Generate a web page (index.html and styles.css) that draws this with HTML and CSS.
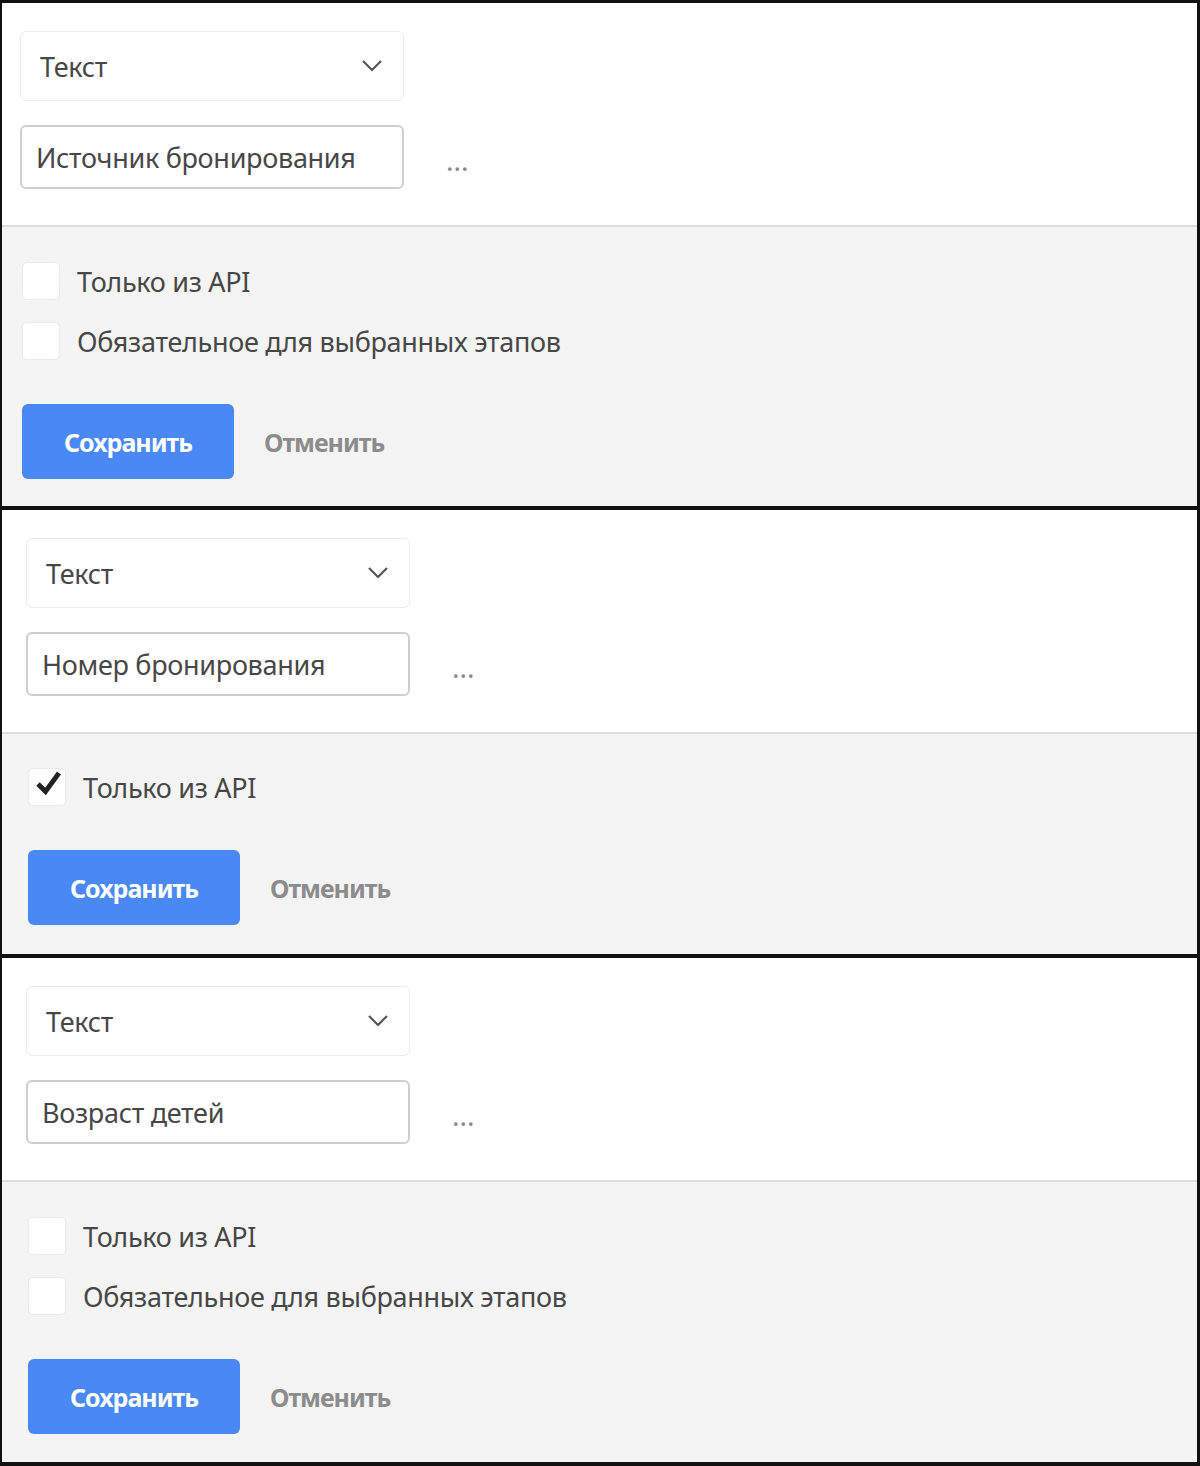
FILE: index.html
```html
<!DOCTYPE html>
<html lang="ru">
<head>
<meta charset="UTF-8">
<meta name="viewport" content="width=device-width, initial-scale=1.0">
<title>Поля бронирования</title>
<link rel="stylesheet" href="styles.css">
</head>
<body>

<div class="panel panel-first">
  <div class="panel-top">
    <div class="select">
      <span>Текст</span>
      <svg class="chevron" width="22" height="14" viewBox="0 0 22 14"><path d="M2 2 L11 11 L20 2" fill="none" stroke="#555" stroke-width="2.2"/></svg>
    </div>
    <div class="input-row">
      <div class="input">Источник бронирования</div>
      <span class="more">...</span>
    </div>
  </div>
  <div class="panel-bottom">
    <div class="checks">
      <label class="check"><span class="box"></span>Только из API</label>
      <label class="check"><span class="box"></span>Обязательное для выбранных этапов</label>
    </div>
    <div class="actions">
      <button class="btn-save">Сохранить</button>
      <button class="btn-cancel">Отменить</button>
    </div>
  </div>
</div>

<div class="panel panel-shift panel-middle">
  <div class="panel-top">
    <div class="select">
      <span>Текст</span>
      <svg class="chevron" width="22" height="14" viewBox="0 0 22 14"><path d="M2 2 L11 11 L20 2" fill="none" stroke="#555" stroke-width="2.2"/></svg>
    </div>
    <div class="input-row">
      <div class="input">Номер бронирования</div>
      <span class="more">...</span>
    </div>
  </div>
  <div class="panel-bottom">
    <div class="checks">
      <label class="check">
        <span class="box">
          <svg class="tick" width="30" height="30" viewBox="0 0 30 30"><path d="M4 15 L11.5 22.5 L25 4" fill="none" stroke="#222" stroke-width="4.8"/></svg>
        </span>Только из API
      </label>
    </div>
    <div class="actions">
      <button class="btn-save">Сохранить</button>
      <button class="btn-cancel">Отменить</button>
    </div>
  </div>
</div>

<div class="panel panel-shift panel-last">
  <div class="panel-top">
    <div class="select">
      <span>Текст</span>
      <svg class="chevron" width="22" height="14" viewBox="0 0 22 14"><path d="M2 2 L11 11 L20 2" fill="none" stroke="#555" stroke-width="2.2"/></svg>
    </div>
    <div class="input-row">
      <div class="input">Возраст детей</div>
      <span class="more">...</span>
    </div>
  </div>
  <div class="panel-bottom">
    <div class="checks">
      <label class="check"><span class="box"></span>Только из API</label>
      <label class="check"><span class="box"></span>Обязательное для выбранных этапов</label>
    </div>
    <div class="actions">
      <button class="btn-save">Сохранить</button>
      <button class="btn-cancel">Отменить</button>
    </div>
  </div>
</div>

</body>
</html>
```

FILE: styles.css
```css
body {
  margin: 0;
  padding: 0;
  font-family: "Noto Sans", "Liberation Sans", sans-serif;
  color: #474747;
  background-color: #fff;
}
.panel {
  border: 2px solid #111;
  border-right-width: 3px;
  box-sizing: border-box;
  width: 1200px;
}
.panel-first {
  border-top-width: 3px;
}
.panel-last {
  border-bottom-width: 4px;
}
.panel-top {
  background-color: #fff;
  padding: 28px 18px 36px;
  border-bottom: 2px solid #dcdcdc;
}
.panel-shift .panel-top {
  padding-left: 24px;
}
.select {
  width: 384px;
  height: 70px;
  box-sizing: border-box;
  border: 1px solid #ececec;
  border-radius: 6px;
  display: flex;
  align-items: center;
  justify-content: space-between;
  padding: 0 20px 0 19px;
  font-size: 27px;
  letter-spacing: -0.3px;
}
.input-row {
  display: flex;
  align-items: center;
  margin-top: 24px;
}
.input {
  width: 384px;
  height: 64px;
  box-sizing: border-box;
  border: 2px solid #cfcfcf;
  border-radius: 6px;
  display: flex;
  align-items: center;
  padding: 0 14px;
  font-size: 27px;
  letter-spacing: -0.3px;
}
.more {
  margin-left: 42px;
  font-size: 28px;
  color: #888;
  padding-top: 6px;
}
.panel-bottom {
  background-color: #f4f4f4;
  padding: 35px 20px 27px;
}
.panel-shift .panel-bottom {
  padding-left: 26px;
  padding-top: 34px;
}
.panel-middle .panel-bottom {
  padding-bottom: 29px;
}
.panel-last .panel-bottom {
  padding-top: 35px;
  padding-bottom: 28px;
}
.checks {
  display: flex;
  flex-direction: column;
  gap: 22px;
}
.check {
  display: flex;
  align-items: center;
  font-size: 27px;
  letter-spacing: -0.3px;
  height: 38px;
}
.box {
  width: 38px;
  height: 38px;
  box-sizing: border-box;
  background-color: #fff;
  border: 1px solid #eaeaea;
  border-radius: 5px;
  margin-right: 17px;
  display: flex;
  align-items: center;
  justify-content: center;
}
.tick {
  margin-top: -6px;
  margin-left: 4px;
}
.actions {
  display: flex;
  align-items: center;
  margin-top: 44px;
}
.btn-save {
  width: 212px;
  height: 75px;
  border: none;
  border-radius: 6px;
  background-color: #4a89f3;
  color: #fff;
  font-family: "Noto Sans", "Liberation Sans", sans-serif;
  font-weight: bold;
  font-size: 25px;
  letter-spacing: -1px;
  cursor: pointer;
}
.btn-cancel {
  border: none;
  background: none;
  margin-left: 30px;
  padding: 0;
  color: #8c8c8c;
  font-family: "Noto Sans", "Liberation Sans", sans-serif;
  font-weight: bold;
  font-size: 25px;
  letter-spacing: -1px;
  cursor: pointer;
}
```
